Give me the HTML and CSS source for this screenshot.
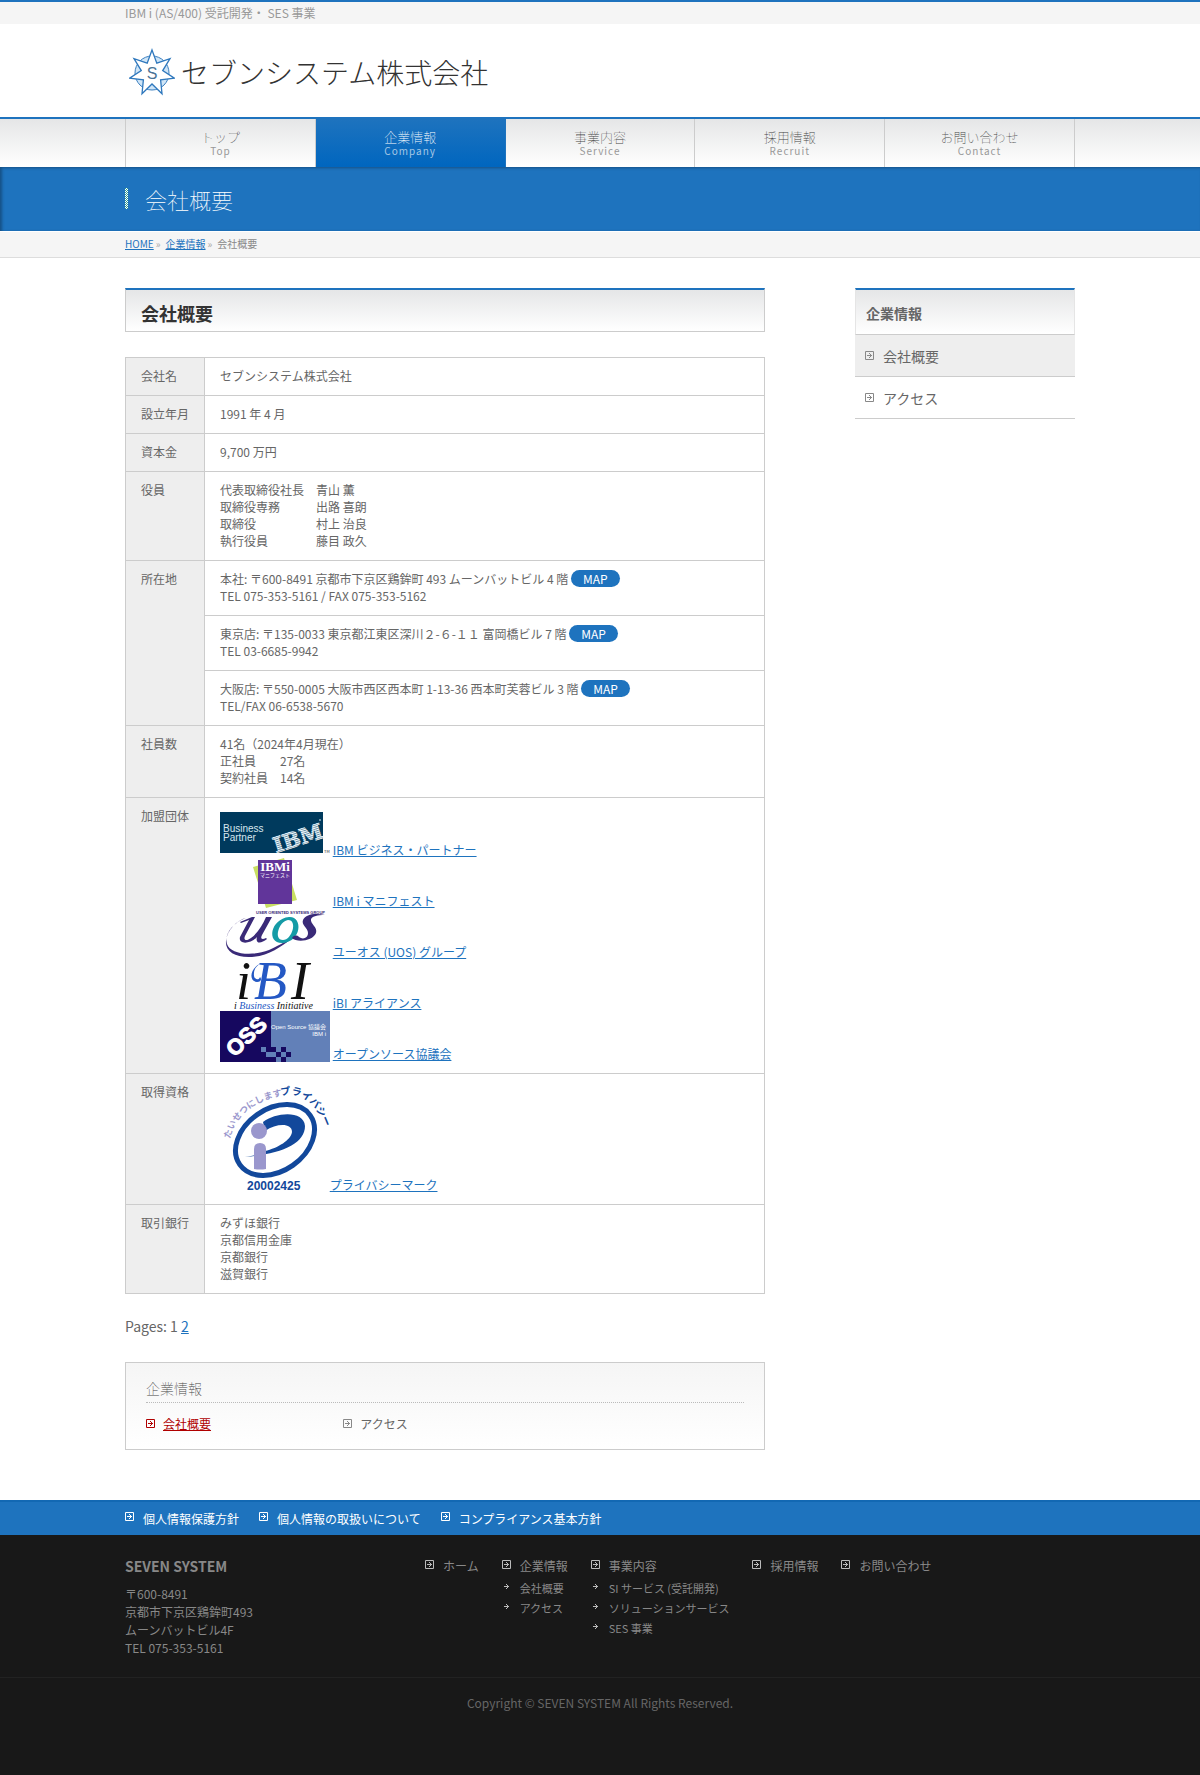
FILE: index.html
```html
<!DOCTYPE html>
<html lang="ja">
  <head>
    <title>会社概要 | セブンシステム株式会社</title>
    <meta charset="UTF-8" />
    <link rel="stylesheet" href="styles.css">
  </head>
  <body>
    <!-- アイコン定義 -->
    <svg class="defs" width="0" height="0" aria-hidden="true">
      <symbol id="boxArrow" viewBox="0 0 9 9">
        <path d="M.5 .5h8v8h-8z" fill="none" stroke="currentColor" />
        <path d="M2 4h4v1h-4zM4 2h1v1h-1zM5 3h1v1h-1zM6 4h1v1h-1zM5 5h1v1h-1zM4 6h1v1h-1z" fill="currentColor" />
      </symbol>
      <symbol id="arrow" viewBox="0 0 5 5">
        <path d="M0 2h4v1h-4zM2 0h1v1h-1zM3 1h1v1h-1zM4 2h1v1h-1zM3 3h1v1h-1zM2 4h1v1h-1z" fill="currentColor" />
      </symbol>
    </svg>

    <header id="header">
      <div class="description">
        <p class="inner">IBM i (AS/400) 受託開発・ SES 事業</p>
      </div>
      <div class="inner">
        <a class="logo" href="#">
          <svg width="46" height="48" viewBox="0 0 46 48" aria-hidden="true">
            <circle cx="23" cy="25" r="17" fill="#cfe5f7" stroke="#3a7fc0" />
            <path d="M23 2L27.800 15.100 41 10.700 33.700 22.600 45.400 30.100 31.600 31.900 33 45.700 23 36 13 45.700 14.400 31.900.6 30.100 12.300 22.600 5 10.700 18.200 15.100z" fill="#fff" stroke="#2f78bd" stroke-width="1.300" />
            <text x="23" y="31" text-anchor="middle" class="logoMark">S</text>
          </svg>
          <span>セブンシステム株式会社</span>
        </a>
      </div>
    </header>

    <nav id="gMenu">
      <ul class="inner">
        <li><a href="#">トップ<span>Top</span></a></li>
        <li class="current"><a href="#">企業情報<span>Company</span></a></li>
        <li><a href="#">事業内容<span>Service</span></a></li>
        <li><a href="#">採用情報<span>Recruit</span></a></li>
        <li><a href="#">お問い合わせ<span>Contact</span></a></li>
      </ul>
    </nav>

    <div id="pageTitle">
      <div class="inner">
        <h1>会社概要</h1>
      </div>
    </div>

    <div id="panList">
      <div class="inner">
        <a href="#">HOME</a><span>»</span><a href="#">企業情報</a><span>»</span>会社概要
      </div>
    </div>

    <div id="main" class="inner">
      <main id="content">
        <h2>会社概要</h2>
        <table>
          <tr>
            <th>会社名</th>
            <td>セブンシステム株式会社</td>
          </tr>
          <tr>
            <th>設立年月</th>
            <td>1991 年 4 月</td>
          </tr>
          <tr>
            <th>資本金</th>
            <td>9,700 万円</td>
          </tr>
          <tr>
            <th>役員</th>
            <td>代表取締役社長　青山 薫<br>取締役専務　　　出路 喜朗<br>取締役　　　　　村上 治良<br>執行役員　　　　藤目 政久</td>
          </tr>
          <tr>
            <th rowspan="3">所在地</th>
            <td>本社: 〒600-8491 京都市下京区鶏鉾町 493 ムーンバットビル 4 階 <a class="map" href="#">MAP</a><br>TEL 075-353-5161 / FAX 075-353-5162</td>
          </tr>
          <tr>
            <td>東京店: 〒135-0033 東京都江東区深川２-６-１１ 富岡橋ビル 7 階 <a class="map" href="#">MAP</a><br>TEL 03-6685-9942</td>
          </tr>
          <tr>
            <td>大阪店: 〒550-0005 大阪市西区西本町 1-13-36 西本町芙蓉ビル 3 階 <a class="map" href="#">MAP</a><br>TEL/FAX 06-6538-5670</td>
          </tr>
          <tr>
            <th>社員数</th>
            <td>41名（2024年4月現在）<br>正社員　　27名<br>契約社員　14名</td>
          </tr>
          <tr>
            <th>加盟団体</th>
            <td>
              <svg class="banner" width="110" height="51" viewBox="0 0 110 51" aria-hidden="true">
                <defs>
                  <pattern id="stripes" width="4" height="2" patternUnits="userSpaceOnUse">
                    <path d="M0 0h4v1.400h-4z" fill="#f4fbff" />
                  </pattern>
                </defs>
                <path d="M0 5h103v41H0z" fill="#003a5d" />
                <text x="3" y="25" class="ibmText">Business</text>
                <text x="3" y="34" class="ibmText">Partner</text>
                <text x="56" y="46" class="ibmLogo" fill="url(#stripes)" stroke="url(#stripes)" transform="rotate(-18 56 46)">IBM</text>
                <circle cx="100" cy="13" r="1" fill="#8fb0c2" />
                <text x="104" y="46" class="ibmTm">TM</text>
              </svg>
              <a href="#">IBM ビジネス・パートナー</a><br>
              <svg class="banner" width="110" height="51" viewBox="0 0 110 51" aria-hidden="true">
                <path d="M33 9l31-9 13 42-31 8z" fill="#c8de62" />
                <path d="M38 2h34v44H38z" fill="#61359a" />
                <text x="55" y="13" text-anchor="middle" class="manifestTop">IBMi</text>
                <text x="55" y="19" text-anchor="middle" class="manifestSub">マニフェスト</text>
              </svg>
              <a href="#">IBM i マニフェスト</a><br>
              <svg class="banner" width="110" height="51" viewBox="0 0 110 51" aria-hidden="true">
                <text x="105" y="5" text-anchor="end" class="uosTop">USER ORIENTED SYSTEMS GROUP</text>
                <path d="M26 9C12 14 4 26 7 35c3 10 24 13 42 6 9-4 15-8 22-11-10 8-23 17-39 18C16 49 5 43 6 32 7 21 17 11 26 9z" fill="#3a2a78" />
                <path d="M20 13l12-5h3L25 27c-2 5 2 5 6 2C38 24 43 15 46 8h6L42 26c-2 4 0 5 4 3l1 1c-6 5-12 5-10-2C31 35 18 36 20 28l9-17-8 3z" fill="#3a2a78" />
                <path fill-rule="evenodd" d="M69 8c14-1 13 24-6 26-17 1-13-24 6-26zm-1 3c-9 1-15 20-5 20 9 0 15-20 5-20z" fill="#159ba6" />
                <path d="M105 6c-8 0-12 1-14 4-1 5 7 8 5 14-3 8-19 10-24 5 2-3 5-3 7-1 4 3 9 1 9-4 0-5-7-8-5-13 3-6 12-7 22-5z" fill="#3a2a78" />
              </svg>
              <a href="#">ユーオス (UOS) グループ</a><br>
              <svg class="banner" width="110" height="51" viewBox="0 0 110 51" aria-hidden="true">
                <text x="16" y="39" class="ibi" fill="#111">i</text>
                <text x="34" y="39" class="ibi" fill="#2458c4">B</text>
                <path d="M42 3C30 7 28 21 37 22c4 0 5-3 3-5-1 4-7 3-6-4 0-4 3-8 8-10z" fill="#2458c4" />
                <text x="71" y="39" class="ibi" fill="#111">I</text>
                <text x="14" y="49" class="ibiSub"><tspan fill="#111">i </tspan><tspan fill="#2458c4">Business</tspan><tspan fill="#111"> Initiative</tspan></text>
              </svg>
              <a href="#">iBI アライアンス</a><br>
              <svg class="banner" width="110" height="51" viewBox="0 0 110 51" aria-hidden="true">
                <path d="M0 0h110v51H0z" fill="#6280b8" />
                <path d="M0 0h51v36h5v5h-5v10H0z" fill="#16085f" />
                <path d="M41 36h5v5h-5zM46 41h5v5h-5z" fill="#6280b8" />
                <path d="M61 36h5v5h-5zM51 46h5v5h-5zM56 41h5v5h-5zM61 46h5v5h-5zM66 41h5v5h-5z" fill="#16085f" />
                <text x="26" y="33" text-anchor="middle" class="oss" transform="rotate(-43 26 25)">OSS</text>
                <text x="106" y="18" text-anchor="end" class="ossText">Open Source 協議会</text>
                <text x="106" y="25" text-anchor="end" class="ossText">IBM i</text>
              </svg>
              <a href="#">オープンソース協議会</a>
            </td>
          </tr>
          <tr>
            <th>取得資格</th>
            <td>
              <svg class="banner" width="107" height="110" viewBox="0 0 107 110" aria-hidden="true">
                <defs>
                  <path id="pmarkArc1" d="M10 56C15 34 34 17 62 13" />
                  <path id="pmarkArc2" d="M61 13C79 7 96 20 104 42" />
                </defs>
                <text class="pmarkArc" fill="#9a97cd"><textPath href="#pmarkArc1">たいせつにします</textPath></text>
                <text class="pmarkArc pmarkBold" fill="#12489b"><textPath href="#pmarkArc2">プライバシー</textPath></text>
                <ellipse cx="55" cy="57" rx="43" ry="31" fill="none" stroke="#12489b" stroke-width="5" transform="rotate(-35 55 57)" />
                <path d="M43 39C56 29 84 27 85 43c0 18-24 28-60 31 9-1 14-3 20-6 13-3 26-11 27-19 0-9-15-9-27-1z" fill="#12489b" />
                <circle cx="39" cy="48" r="8" fill="#9a97cd" />
                <path d="M34 66q0-6 6-6t6 6v20q-6 1-12 0z" fill="#9a97cd" />
                <text x="27" y="107" class="pmarkNo">20002425</text>
              </svg>
              <a href="#">プライバシーマーク</a>
            </td>
          </tr>
          <tr>
            <th>取引銀行</th>
            <td>みずほ銀行<br>京都信用金庫<br>京都銀行<br>滋賀銀行</td>
          </tr>
        </table>

        <p class="pages">Pages: 1 <a href="#">2</a></p>

        <section class="childPageBox">
          <h4>企業情報</h4>
          <ul>
            <li class="current"><a href="#"><svg class="icon"><use href="#boxArrow" /></svg>会社概要</a></li>
            <li><a href="#"><svg class="icon"><use href="#boxArrow" /></svg>アクセス</a></li>
          </ul>
        </section>
      </main>

      <aside id="sideTower">
        <h3>企業情報</h3>
        <ul>
          <li class="current"><a href="#"><svg class="icon"><use href="#boxArrow" /></svg>会社概要</a></li>
          <li><a href="#"><svg class="icon"><use href="#boxArrow" /></svg>アクセス</a></li>
        </ul>
      </aside>
    </div>

    <footer id="footer">
      <nav class="footMenu">
        <ul class="inner">
          <li><a href="#"><svg class="icon"><use href="#boxArrow" /></svg>個人情報保護方針</a></li>
          <li><a href="#"><svg class="icon"><use href="#boxArrow" /></svg>個人情報の取扱いについて</a></li>
          <li><a href="#"><svg class="icon"><use href="#boxArrow" /></svg>コンプライアンス基本方針</a></li>
        </ul>
      </nav>

      <div class="footSection inner">
        <div class="footInfo">
          <p class="footName">SEVEN SYSTEM</p>
          <address>〒600-8491<br>京都市下京区鶏鉾町493<br>ムーンバットビル4F<br>TEL 075-353-5161</address>
        </div>
        <ul class="siteMap">
          <li><a href="#"><svg class="icon"><use href="#boxArrow" /></svg>ホーム</a></li>
          <li>
            <a href="#"><svg class="icon"><use href="#boxArrow" /></svg>企業情報</a>
            <ul>
              <li><a href="#"><svg class="icon"><use href="#arrow" /></svg>会社概要</a></li>
              <li><a href="#"><svg class="icon"><use href="#arrow" /></svg>アクセス</a></li>
            </ul>
          </li>
          <li>
            <a href="#"><svg class="icon"><use href="#boxArrow" /></svg>事業内容</a>
            <ul>
              <li><a href="#"><svg class="icon"><use href="#arrow" /></svg>SI サービス (受託開発)</a></li>
              <li><a href="#"><svg class="icon"><use href="#arrow" /></svg>ソリューションサービス</a></li>
              <li><a href="#"><svg class="icon"><use href="#arrow" /></svg>SES 事業</a></li>
            </ul>
          </li>
          <li><a href="#"><svg class="icon"><use href="#boxArrow" /></svg>採用情報</a></li>
          <li><a href="#"><svg class="icon"><use href="#boxArrow" /></svg>お問い合わせ</a></li>
        </ul>
      </div>

      <p class="copyright">Copyright © SEVEN SYSTEM All Rights Reserved.</p>
    </footer>
  </body>
</html>
```

FILE: styles.css
```css
* {
  box-sizing: border-box;
}

html {
  background-color: #181818;
}

body {
  margin: 0;
  background-color: #fff;
  color: #666;
  font-family: "Noto Sans CJK JP", sans-serif;
  font-size: 12px;
  line-height: 17px;
}

h1,
h2,
h3,
h4,
p,
ul {
  margin: 0;
  padding: 0;
}

ul {
  list-style: none;
}

a {
  color: #1e73be;
}

.defs {
  display: block;
}

.inner {
  width: 100%;
  max-width: 950px;
  margin: 0 auto;
}

.icon {
  width: 9px;
  height: 9px;
  flex: none;
  color: #888;
}

/* ヘッダー */
.description {
  border-top: 2px solid #1e73be;
  background-color: #f5f5f5;
  color: #999;
  line-height: 22px;
}

.logo {
  display: flex;
  align-items: center;
  gap: 6px;
  height: 93px;
  padding: 2px 0 0 4px;
  color: #333;
  font-size: 28px;
  font-weight: 300;
  line-height: 40px;
  text-decoration: none;
}

.logoMark {
  font-family: "Liberation Sans", sans-serif;
  font-size: 16px;
  fill: #4a7396;
}

/* グローバルメニュー */
#gMenu {
  border-top: 2px solid #1e73be;
  background: linear-gradient(#e5e6e7, #fff);
}

#gMenu ul {
  display: flex;
  border-left: 1px solid #ccc;
}

#gMenu li {
  flex: 1;
  border-right: 1px solid #ccc;
}

#gMenu a {
  display: block;
  height: 48px;
  padding-top: 9px;
  color: #444;
  font-size: 13px;
  font-weight: 100;
  text-align: center;
  text-decoration: none;
}

#gMenu span {
  display: block;
  color: #999;
  font-size: 10px;
  font-weight: 400;
  letter-spacing: 1px;
  line-height: 11px;
}

#gMenu .current {
  border-color: #1e73be;
  background: linear-gradient(#1e73be, #0066bf);
}

#gMenu .current a {
  color: #fff;
}

#gMenu .current span {
  color: #a5c7e5;
}

/* ページタイトル */
#pageTitle {
  padding: 16px 0;
  background-color: #1e73be;
  box-shadow: inset 2px 1px 3px rgba(0, 0, 0, 0.3);
}

#pageTitle h1 {
  display: flex;
  align-items: center;
  gap: 17px;
  color: #fff;
  font-size: 22px;
  font-weight: 100;
  line-height: 32px;
}

#pageTitle h1::before {
  content: "";
  flex: none;
  width: 3px;
  height: 21px;
  margin-bottom: 2px;
  background: repeating-conic-gradient(#fff 0 25%, #2f9a90 0 50%) 0 0 / 2px 2px;
}

#panList {
  padding: 4px 0 5px;
  border-top: 1px solid #fff;
  border-bottom: 1px solid #ddd;
  background-color: #f5f5f5;
  color: #888;
  font-size: 10px;
  line-height: 16px;
}

#panList span {
  margin: 0 5px 0 2px;
  color: #aaa;
}

/* メイン */
#main {
  display: flex;
  justify-content: space-between;
  align-items: flex-start;
  padding: 30px 0 50px;
}

#content {
  width: 640px;
}

#content h2 {
  margin-bottom: 25px;
  padding: 10px 15px 5px;
  border: 1px solid #ccc;
  border-top: 2px solid #1e73be;
  background: linear-gradient(#e5e6e7, #fff);
  color: #333;
  font-size: 18px;
  line-height: 26px;
}

#content table {
  width: 100%;
  border-collapse: collapse;
}

#content th,
#content td {
  padding: 9px 15px 11px;
  border: 1px solid #ccc;
  font-weight: 400;
  text-align: left;
  vertical-align: top;
}

#content th {
  width: 79px;
  background-color: #eee;
  white-space: nowrap;
}

.banner {
  overflow: visible;
  vertical-align: bottom;
}

#content .map {
  display: inline-block;
  padding: 0 12px;
  border-radius: 9px;
  background-color: #1e73be;
  color: #fff;
  text-decoration: none;
}

.pages {
  margin: 22px 0 26px;
  font-size: 14px;
  line-height: 20px;
}

.childPageBox {
  padding: 15px 20px 17px;
  border: 1px solid #ccc;
  background: linear-gradient(#f5f5f5, #fff);
}

.childPageBox h4 {
  padding-bottom: 4px;
  border-bottom: 1px dotted #bbb;
  color: #444;
  font-size: 14px;
  font-weight: 100;
  line-height: 20px;
}

.childPageBox ul {
  display: flex;
  padding-top: 12px;
}

.childPageBox li {
  width: 33%;
}

.childPageBox a {
  color: #666;
  text-decoration: none;
}

.childPageBox .icon {
  margin-right: 8px;
  vertical-align: 1px;
}

.childPageBox .current a {
  color: #b00000;
  text-decoration: underline;
}

.childPageBox .current .icon {
  color: #b00000;
}

/* サイドバー */
#sideTower {
  width: 220px;
  font-size: 14px;
}

#sideTower h3 {
  padding: 13px 10px 11px;
  border: 1px solid #e5e5e5;
  border-top: 2px solid #1e73be;
  border-bottom-color: #ccc;
  background: linear-gradient(#e5e6e7, #fff);
  font-size: 14px;
  line-height: 20px;
}

#sideTower li {
  border-bottom: 1px solid #ccc;
}

#sideTower a {
  display: flex;
  gap: 9px;
  padding: 11px 10px 10px;
  color: #666;
  line-height: 20px;
  text-decoration: none;
}

#sideTower .icon {
  margin-top: 5px;
}

#sideTower .current {
  background-color: #eee;
}

/* フッター */
#footer {
  background-color: #181818;
  color: #888;
}

#footer a {
  display: flex;
  gap: 9px;
  color: inherit;
  text-decoration: none;
}

#footer .icon {
  margin-top: 3px;
  color: #bbb;
}

.footMenu {
  border-top: 2px solid #1268b3;
  background-color: #1e73be;
  color: #fff;
}

.footMenu ul {
  display: flex;
  gap: 20px;
  padding: 8px 0;
}

#footer .footMenu .icon {
  margin-top: 2px;
  color: #fff;
}

.footSection {
  display: flex;
  padding: 19px 0 20px;
}

.footInfo {
  width: 300px;
}

.footName {
  margin-bottom: 7px;
  font-size: 14px;
  font-weight: 700;
  line-height: 24px;
}

#footer address {
  font-style: normal;
  line-height: 18px;
}

.siteMap {
  display: flex;
  gap: 23px;
  padding-top: 3px;
}

.siteMap ul {
  padding-top: 4px;
  font-size: 11px;
  line-height: 20px;
}

#footer .siteMap ul .icon {
  width: 5px;
  height: 5px;
  margin: 6px 2px 0;
}

.copyright {
  padding: 16px 0 64px;
  border-top: 1px solid #222;
  color: #666;
  text-align: center;
}

/* バナー内の文字 */
.ibmText {
  font-family: "Liberation Sans", sans-serif;
  font-size: 10px;
  fill: #d6e6ee;
}

.ibmLogo {
  font-family: "DejaVu Serif", serif;
  font-size: 21px;
  font-weight: 700;
}

.ibmTm {
  font-size: 4px;
  fill: #333;
}

.manifestTop {
  font-family: "Liberation Serif", serif;
  font-size: 13px;
  font-weight: 700;
  fill: #fff;
}

.manifestSub {
  font-size: 5px;
  fill: #fff;
}

.uosTop {
  font-family: "Liberation Sans", sans-serif;
  font-size: 4px;
  font-weight: 700;
  fill: #3a2a78;
}

.ibi {
  font-family: "Liberation Serif", serif;
  font-size: 54px;
  font-style: italic;
}

.ibiSub {
  font-family: "Liberation Serif", serif;
  font-size: 10px;
  font-style: italic;
}

.oss {
  font-family: "Liberation Sans", sans-serif;
  font-size: 22px;
  font-weight: 700;
  fill: #fff;
  stroke: #fff;
}

.ossText {
  font-family: "Liberation Sans", "Noto Sans CJK JP", sans-serif;
  font-size: 6px;
  fill: #fff;
}

.pmarkArc {
  font-size: 9px;
  font-weight: 700;
}

.pmarkBold {
  font-size: 10px;
}

.pmarkNo {
  font-family: "Liberation Sans", sans-serif;
  font-size: 12px;
  font-weight: 700;
  fill: #12489b;
}
```
